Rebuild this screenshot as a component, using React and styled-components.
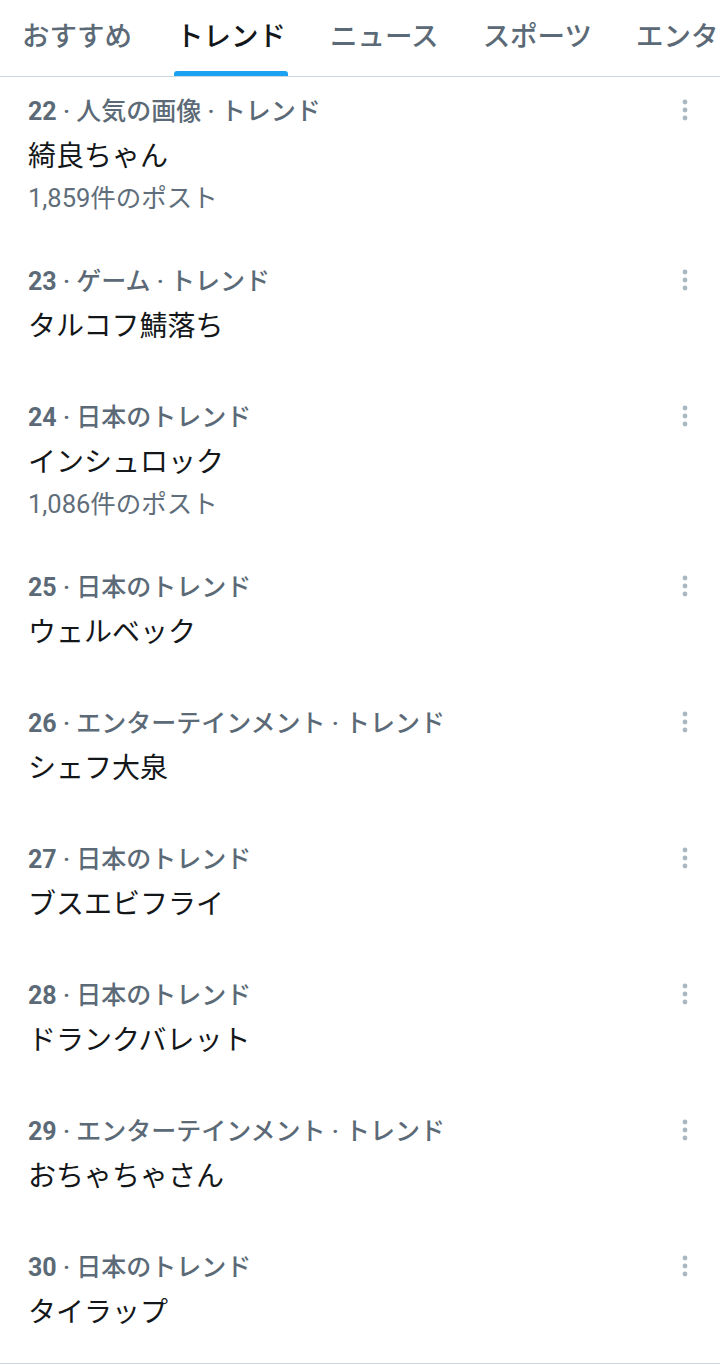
import React from 'react';
import styled, { createGlobalStyle } from 'styled-components';

const tabs = ['おすすめ', 'トレンド', 'ニュース', 'スポーツ', 'エンターテインメント'];

const trends = [
    { rank: 22, context: '人気の画像 · トレンド', name: '綺良ちゃん', count: '1,859件のポスト' },
    { rank: 23, context: 'ゲーム · トレンド', name: 'タルコフ鯖落ち' },
    { rank: 24, context: '日本のトレンド', name: 'インシュロック', count: '1,086件のポスト' },
    { rank: 25, context: '日本のトレンド', name: 'ウェルベック' },
    { rank: 26, context: 'エンターテインメント · トレンド', name: 'シェフ大泉' },
    { rank: 27, context: '日本のトレンド', name: 'ブスエビフライ' },
    { rank: 28, context: '日本のトレンド', name: 'ドランクバレット' },
    { rank: 29, context: 'エンターテインメント · トレンド', name: 'おちゃちゃさん' },
    { rank: 30, context: '日本のトレンド', name: 'タイラップ' },
];

const GlobalStyle = createGlobalStyle`
  html, body {
    margin: 0;
    padding: 0;
    height: 1365px;
    overflow: hidden;
    background: #ffffff;
  }
  body {
    font-family: Roboto, "Noto Sans CJK JP", sans-serif;
    -webkit-font-smoothing: antialiased;
  }
`;

const Page = styled.div`
  width: 720px;
  display: flex;
  flex-direction: column;
`;

const TabBar = styled.nav`
  display: flex;
  height: 76px;
  overflow: hidden;
  white-space: nowrap;
  border-bottom: 1px solid #ccd6dd;
`;

const Tab = styled.div`
  flex: none;
  display: flex;
  flex-direction: column;
  padding: 0 22px;
`;

const TabLabel = styled.span`
  height: 71px;
  line-height: 73px;
  font-size: 27.5px;
  font-weight: 500;
  color: ${(props) => (props.active ? '#14171a' : '#5b6a76')};
`;

const Indicator = styled.span`
  height: 5px;
  margin: 0 -2px;
  border-radius: 3px 3px 0 0;
  background: ${(props) => (props.active ? '#1da1f2' : 'transparent')};
`;

const List = styled.div`
  display: flex;
  flex-direction: column;
  border-bottom: 1px solid #ccd6dd;
`;

const Item = styled.div`
  display: flex;
  align-items: flex-start;
  padding: 26px 30px 28px 28px;
  &:first-child {
    padding-top: 20px;
  }
`;

const Body = styled.div`
  flex: 1;
  display: flex;
  flex-direction: column;
`;

const Meta = styled.div`
  line-height: 30px;
  font-size: 25px;
  font-weight: 500;
  color: #5b6a76;
`;

const Rank = styled.span`
  font-weight: 700;
`;

const Name = styled.div`
  margin-top: 4px;
  padding-top: 4px;
  line-height: 44px;
  font-size: 28px;
  color: #14171a;
`;

const Count = styled.div`
  margin-top: 5px;
  line-height: 29px;
  font-size: 25.5px;
  color: #5f6e7a;
`;

const MenuButton = styled.button`
  flex: none;
  display: flex;
  margin-top: 1px;
  padding: 0;
  border: 0;
  background: none;
  color: #aab8c2;
`;

const Dots = () => (
    <svg width="10" height="24" viewBox="0 0 10 24" fill="currentColor">
        <circle cx="5" cy="4" r="2.4" />
        <circle cx="5" cy="12" r="2.4" />
        <circle cx="5" cy="20" r="2.4" />
    </svg>
);

const TrendItem = ({ trend }) => (
    <Item>
        <Body>
            <Meta>
                <Rank>{trend.rank}</Rank> · {trend.context}
            </Meta>
            <Name>{trend.name}</Name>
            {trend.count && <Count>{trend.count}</Count>}
        </Body>
        <MenuButton aria-label="その他">
            <Dots />
        </MenuButton>
    </Item>
);

export default function App() {
    return (
        <Page>
            <GlobalStyle />
            <TabBar>
                {tabs.map((tab) => (
                    <Tab key={tab}>
                        <TabLabel active={tab === 'トレンド'}>{tab}</TabLabel>
                        <Indicator active={tab === 'トレンド'} />
                    </Tab>
                ))}
            </TabBar>
            <List>
                {trends.map((trend) => (
                    <TrendItem key={trend.rank} trend={trend} />
                ))}
            </List>
        </Page>
    );
}
